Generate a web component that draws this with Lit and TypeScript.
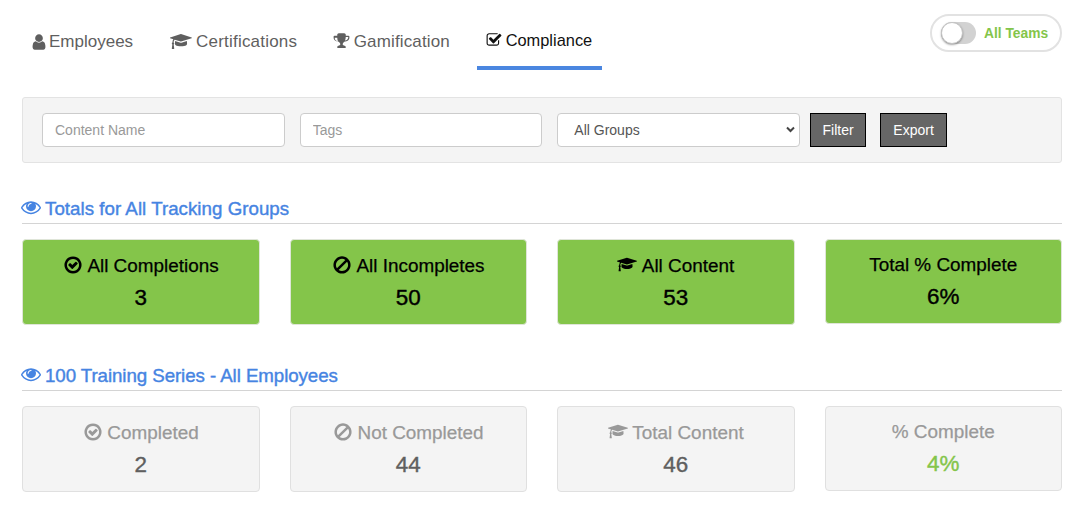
import { LitElement, html, css, svg } from "lit";
import { customElement } from "lit/decorators.js";

const P: Record<string, [string, string]> = {
  user: ["0 0 1792 1792", "M1536 1399q0 109-62.5 187t-150.5 78h-854q-88 0-150.5-78t-62.5-187q0-85 8.5-160.5t31.5-152 58.5-131 94-89 134.5-34.5q131 128 313 128t313-128q76 0 134.5 34.5t94 89 58.5 131 31.5 152 8.5 160.5zm-256-887q0 159-112.5 271.5t-271.5 112.5-271.5-112.5-112.5-271.5 112.5-271.5 271.5-112.5 271.5 112.5 112.5 271.5z"],
  cap: ["0 0 2304 1792", "M1774 836l18 316q4 69-82 128t-235 93.5-323 34.5-323-34.5-235-93.5-82-128l18-316 574 181q22 7 48 7t48-7zm530-324q0 34-32 45l-1120 352q-4 1-10 1t-10-1l-652-206q-43 34-71 111.500t-34 178.500q63 36 63 109 0 69-58 107l58 433q2 14-8 25-9 11-24 11h-192q-15 0-24-11-10-11-8-25l58-433q-58-38-58-107 0-73 65-111 11-207 98-330l-333-104q-32-11-32-45t32-45l1120-352q4-1 10-1t10 1l1120 352q32 11 32 45z"],
  trophy: ["0 0 1792 1792", "M522 883q-74-162-74-371h-256v96q0 78 94.500 162t235.500 113zm1078-371v-96h-256q0 209-74 371 141-29 235.500-113t94.500-162zm128-128v128q0 71-41.500 143t-112 130-173 97.500-215.500 44.500q-42 54-95 95-38 34-52.500 72.500t-14.500 89.500q0 54 30.500 91t97.500 37q75 0 133.500 45.500t58.500 114.500v64q0 14-9 23t-23 9h-832q-14 0-23-9t-9-23v-64q0-69 58.500-114.500t133.500-45.500q67 0 97.500-37t30.500-91q0-51-14.500-89.500t-52.500-72.500q-53-41-95-95-113-5-215.500-44.500t-173-97.500-112-130-41.500-143v-128q0-40 28-68t68-28h288v-96q0-66 47-113t113-47h576q66 0 113 47t47 113v96h288q40 0 68 28t28 68z"],
  check: ["0 0 1792 1792", "M1472 930v318q0 119-84.500 203.500t-203.500 84.500h-832q-119 0-203.500-84.500t-84.500-203.500v-832q0-119 84.500-203.500t203.500-84.500h832q63 0 117 25 15 7 18 23 3 17-9 29l-49 49q-10 10-23 10-3 0-9-2-23-6-45-6h-832q-66 0-113 47t-47 113v832q0 66 47 113t113 47h832q66 0 113-47t47-113v-254q0-13 9-22l64-64q10-10 23-10 6 0 12 3 20 8 20 29zm231-489l-814 814q-24 24-57 24t-57-24l-430-430q-24-24-24-57t24-57l110-110q24-24 57-24t57 24l263 263 647-647q24-24 57-24t57 24l110 110q24 24 24 57t-24 57z"],
  eye: ["0 0 1792 1792", "M1664 960q-152-236-381-353 61 104 61 225 0 185-131.500 316.500t-316.500 131.500-316.500-131.500-131.500-316.500q0-121 61-225-229 117-381 353 133 205 333.500 326.500t434.500 121.500 434.500-121.500 333.500-326.500zm-720-384q0-20-14-34t-34-14q-125 0-214.500 89.500t-89.500 214.500q0 20 14 34t34 14 34-14 14-34q0-86 61-147t147-61q20 0 34-14t14-34zm848 384q0 34-20 69-140 230-376.500 368.500t-499.500 138.500-499.500-139-376.500-368q-20-35-20-69t20-69q140-229 376.500-368t499.500-139 499.500 139 376.500 368q20 35 20 69z"],
  circle: ["0 0 1792 1792", "M1299 813l-422 422q-19 19-45 19t-45-19l-294-294q-19-19-19-45t19-45l102-102q19-19 45-19t45 19l147 147 275-275q19-19 45-19t45 19l102 102q19 19 19 45t-19 45zm141 83q0-148-73-273t-198-198-273-73-273 73-198 198-73 273 73 273 198 198 273 73 273-73 198-198 73-273zm224 0q0 209-103 385.500t-279.500 279.500-385.500 103-385.500-103-279.500-279.500-103-385.500 103-385.500 279.500-279.500 385.500-103 385.500 103 279.500 279.500 103 385.500z"],
  ban: ["0 0 1792 1792", "M1440 893q0-161-87-295l-754 753q137 89 297 89 111 0 211.500-43.500t173.500-116.500 116-174.500 43-212.500zm-999 299l755-754q-135-91-300-91-148 0-273 73t-198 199-73 274q0 162 89 299zm1223-299q0 157-61 300t-163.500 246-245 164-298.500 61-298.500-61-245-164-163.500-246-61-300 61-299.500 163.500-245.500 245-164 298.500-61 298.500 61 245 164 163.500 245.500 61 299.500z"],
};

const icon = (name: string, cls = "") => {
  const [vb, d] = P[name];
  return html`<svg class="ic ${cls}" viewBox=${vb} aria-hidden="true">${svg`<path fill="currentColor" d=${d}></path>`}</svg>`;
};

type Stat = { icon?: string; label: string; value: string; good?: boolean };

const totals: Stat[] = [
  { icon: "circle", label: "All Completions", value: "3" },
  { icon: "ban", label: "All Incompletes", value: "50" },
  { icon: "cap", label: "All Content", value: "53" },
  { label: "Total % Complete", value: "6%" },
];
const series: Stat[] = [
  { icon: "circle", label: "Completed", value: "2" },
  { icon: "ban", label: "Not Completed", value: "44" },
  { icon: "cap", label: "Total Content", value: "46" },
  { label: "% Complete", value: "4%", good: true },
];

@customElement("app-root")
export class AppRoot extends LitElement {
  static styles = css`
    :host {
      display: block;
      width: 1076px;
      height: 513px;
      overflow: hidden;
      box-sizing: border-box;
      padding: 0 14px 0 22px;
      background: #fff;
      font-family: "Liberation Sans", Arial, sans-serif;
      color: #555;
    }
    .ic { display: inline-block; flex: none; }
    .top {
      display: flex;
      justify-content: space-between;
      align-items: flex-start;
      height: 70px;
    }
    .tabs { display: flex; height: 70px; padding-left: 7.500px; }
    .tab {
      display: flex;
      align-items: center;
      height: 66px;
      padding-top: 18px;
      box-sizing: border-box;
      font-size: 17px;
      color: #5f5f5f;
      white-space: nowrap;
    }
    .tab .ic { height: 17px; margin-top: -1px; }
    .tab.t1 { margin-right: 37px; }
    .tab.t1 .ic { width: 18px; height: 18px; margin-right: 1.500px; }
    .tab.t2 { margin-right: 35.500px; letter-spacing: 0.2px; }
    .tab.t2 .ic { width: 22px; margin-right: 4px; }
    .tab.t3 { margin-right: 27.200px; letter-spacing: 0.15px; }
    .tab.t3 .ic { width: 17px; margin-right: 4px; }
    .tab.on {
      height: 70px;
      padding: 14px 9.500px 0 8.500px;
      font-size: 16.4px;
      color: #111;
      border-bottom: 4px solid #4a86e0;
    }
    .tab.on .ic { width: 16px; height: 16px; margin-right: 4px; }
    .toggle {
      display: flex;
      align-items: center;
      box-sizing: border-box;
      width: 132px;
      height: 38px;
      margin-top: 14px;
      padding-left: 9px;
      border: 2px solid #e2e2e2;
      border-radius: 19px;
      font-size: 13.8px;
      font-weight: bold;
      color: #84c54a;
    }
    .switch {
      position: relative;
      width: 35px;
      height: 22px;
      margin-right: 8px;
      border-radius: 11px;
      background: #d2d2d2;
    }
    .knob {
      position: absolute;
      left: 0;
      top: 0;
      width: 22px;
      height: 22px;
      box-sizing: border-box;
      border-radius: 50%;
      background: #fff;
      border: 1px solid #c4c4c4;
      box-shadow: 0 1px 2px rgba(0, 0, 0, 0.35);
    }
    .panel {
      display: flex;
      align-items: center;
      margin-top: 27px;
      padding: 15px 19px;
      border: 1px solid #e3e3e3;
      border-radius: 3px;
      background: #f4f4f4;
    }
    .field {
      box-sizing: border-box;
      width: 242.67px;
      height: 34px;
      margin-right: 15px;
      padding: 0 12px;
      border: 1px solid #ccc;
      border-radius: 4px;
      background: #fff;
      font: 14px "Liberation Sans", Arial, sans-serif;
      color: #555;
      outline: none;
    }
    .field::placeholder { color: #999; opacity: 1; }
    .sel-wrap { position: relative; width: 242.67px; height: 34px; margin-right: 10px; }
    select.field {
      width: 100%;
      margin: 0;
      padding: 0 16px;
      appearance: none;
      -webkit-appearance: none;
    }
    .chev { position: absolute; right: 5px; top: 13px; width: 9px; height: 7px; color: #444; pointer-events: none; }
    .btn {
      box-sizing: border-box;
      height: 34px;
      padding: 0 11.5px;
      border: 1px solid #000;
      background: #666;
      color: #fff;
      font: 14px "Liberation Sans", Arial, sans-serif;
    }
    .btn + .btn { margin-left: 14px; min-width: 67px; }
    .head {
      display: flex;
      align-items: center;
      height: 28px;
      box-sizing: border-box;
      border-bottom: 1px solid #d4d4d4;
      margin-top: 33px;
      padding-bottom: 2px;
      font-size: 18.72px;
      letter-spacing: 0.03px;
      color: #4684e2;
      -webkit-text-stroke: 0.4px #4684e2;
    }
    .head.second { margin-top: 38px; letter-spacing: -0.07px; }
    .head + .cards { margin-top: 15px; }
    .head .ic { width: 20px; height: 20px; margin: -3px 4px 0 -1px; }
    .cards {
      display: grid;
      grid-template-columns: repeat(4, 1fr);
      column-gap: 30px;
      align-items: start;
    }
    .card {
      box-sizing: border-box;
      height: 86px;
      padding-top: 15px;
      border: 1px solid #e0e0e0;
      border-radius: 4px;
      text-align: center;
    }
    .card.noicon { height: 85px; padding-top: 14px; }
    .green .card { background: #84c54a; border-color: #dfe5d8; color: #000; }
    .grey .card { background: #f4f4f4; color: #999; }
    .label {
      display: flex;
      justify-content: center;
      align-items: center;
      gap: 4.5px;
      height: 22px;
      font-size: 18.9px;
      -webkit-text-stroke: 0.25px currentColor;
      white-space: nowrap;
    }
    .label .ic { width: 20px; height: 20px; margin-top: -3px; }
    .label .ic.cap { width: 20px; height: 17px; }
    .value {
      margin-top: 7px;
      height: 28px;
      line-height: 28px;
      font-size: 22.4px;
      -webkit-text-stroke: 0.4px currentColor;
    }
    .grey .value { color: #5f5f5f; }
    .grey .value.good { color: #84c54a; }
  `;

  private stats(items: Stat[], cls: string) {
    return html`<div class="cards ${cls}">
      ${items.map(
        (s) => html`<div class="card ${s.icon ? "" : "noicon"}">
          <div class="label">${s.icon ? icon(s.icon, s.icon) : ""}<span>${s.label}</span></div>
          <div class="value ${s.good ? "good" : ""}">${s.value}</div>
        </div>`
      )}
    </div>`;
  }

  render() {
    return html`
      <div class="top">
        <nav class="tabs">
          <div class="tab t1">${icon("user")}Employees</div>
          <div class="tab t2">${icon("cap")}Certifications</div>
          <div class="tab t3">${icon("trophy")}Gamification</div>
          <div class="tab on">${icon("check")}Compliance</div>
        </nav>
        <div class="toggle">
          <div class="switch"><div class="knob"></div></div>
          All Teams
        </div>
      </div>
      <div class="panel">
        <input class="field" placeholder="Content Name" />
        <input class="field" placeholder="Tags" />
        <div class="sel-wrap">
          <select class="field"><option>All Groups</option></select>
          <svg class="chev" viewBox="0 0 9 7"><path d="M1 1.5l3.500 3.500 3.500-3.500" fill="none" stroke="currentColor" stroke-width="2"></path></svg>
        </div>
        <button class="btn">Filter</button>
        <button class="btn">Export</button>
      </div>
      <div class="head">${icon("eye")}Totals for All Tracking Groups</div>
      ${this.stats(totals, "green")}
      <div class="head second">${icon("eye")}100 Training Series - All Employees</div>
      ${this.stats(series, "grey")}
    `;
  }
}
